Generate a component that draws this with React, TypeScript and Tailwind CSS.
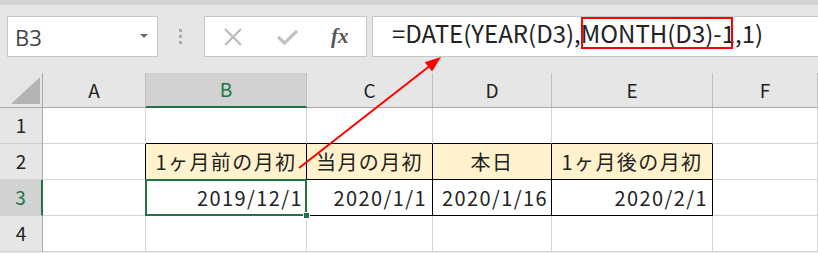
import React from "react";

const F = { fontFamily: '"Noto Sans CJK JP", "Noto Sans", sans-serif' };

function Cell({ className = "", children }: { className?: string; children?: React.ReactNode }) {
  return <div className={"flex items-center border-r border-b " + className}>{children}</div>;
}

export default function App() {
  return (
    <div className="relative w-[818px] h-[253px] overflow-hidden bg-[#e6e6e6]" style={F}>
      {/* top band */}
      <div className="h-[5px] bg-[#d4d4d4]" />
      {/* toolbar */}
      <div className="flex items-start pl-[7px] pt-[11px] h-[52px]">
        <div className="w-[151px] h-[41px] bg-white border border-[#c6c6c6] flex items-center justify-between pl-[7px] pr-[9px]">
          <span className="text-[22px] text-[#444] leading-none" style={{ fontFamily: '"Open Sans", "Noto Sans", sans-serif' }}>B3</span>
          <svg width="8" height="5" viewBox="0 0 8 5"><polygon points="0,0 8,0 4,4" fill="#6b6b6b" /></svg>
        </div>
        <div className="ml-[21px] mt-[13px] flex flex-col gap-[3px]">
          <div className="w-[3px] h-[3px] bg-[#aaaaaa]" />
          <div className="w-[3px] h-[3px] bg-[#aaaaaa]" />
          <div className="w-[3px] h-[3px] bg-[#aaaaaa]" />
        </div>
        <div className="ml-[22px] w-[163px] h-[41px] bg-white border border-[#c6c6c6] flex items-center">
          <svg className="ml-[18px]" width="20" height="18" viewBox="0 0 20 18">
            <path d="M2 1 L18 17 M18 1 L2 17" stroke="#b9b9b9" strokeWidth="2" fill="none" />
          </svg>
          <svg className="ml-[34px]" width="21" height="16" viewBox="0 0 21 16">
            <path d="M1 8 L7.5 14 L20 2" stroke="#c2c2c2" strokeWidth="3.2" fill="none" />
          </svg>
          <span className="ml-[33px] text-[21px] italic text-[#555] leading-none font-semibold" style={{ fontFamily: '"Liberation Serif", "DejaVu Serif", serif' }}>
            fx
          </span>
        </div>
        <div className="ml-[5px] flex-1 h-[41px] bg-white border border-[#c6c6c6] border-r-0 flex items-center pl-[19px] pb-[8px]">
          <span className="text-[24px] leading-none text-[#222] whitespace-nowrap">
            =DATE(YEAR(D3),
            <span className="relative">
              MONTH(D3)-1
              <span className="absolute left-[0px] right-[2px] top-[2px] bottom-[1px] border-2 border-[#ff0000]" />
            </span>
            ,1)
          </span>
        </div>
      </div>
      {/* gap */}
      <div className="h-[16px]" />
      {/* sheet */}
      <div
        className="grid text-[#222]"
        style={{ gridTemplateColumns: "43px 103px 161px 126px 119px 161px 105px", gridTemplateRows: "35px 36px 36px 36px 36px" }}
      >
        {/* header row */}
        <div className="relative border-r border-b border-[#a8a8a8] bg-[#e6e6e6]">
          <svg className="absolute left-[11px] top-[4px]" width="29" height="27" viewBox="0 0 29 27">
            <polygon points="29,0 29,27 0,27" fill="#b4b4b4" />
          </svg>
        </div>
        <Cell className="justify-center border-[#bfbfbf] border-b-[#a8a8a8] text-[19px]">A</Cell>
        <Cell className="justify-center bg-[#d2d2d2] border-[#bfbfbf] border-b-2 border-b-[#217346] text-[19px] text-[#217346]">B</Cell>
        <Cell className="justify-center border-[#bfbfbf] border-b-[#a8a8a8] text-[19px]">C</Cell>
        <Cell className="justify-center border-[#bfbfbf] border-b-[#a8a8a8] text-[19px]">D</Cell>
        <Cell className="justify-center border-[#bfbfbf] border-b-[#a8a8a8] text-[19px]">E</Cell>
        <Cell className="justify-center border-[#bfbfbf] border-b-[#a8a8a8] text-[19px]">F</Cell>

        {/* row 1 */}
        <Cell className="justify-center border-r-[#a8a8a8] border-b-[#cfcfcf] text-[19px]">1</Cell>
        <Cell className="bg-white border-[#d4d4d4]" />
        <Cell className="bg-white border-r-[#d4d4d4] border-b-black" />
        <Cell className="bg-white border-r-[#d4d4d4] border-b-black" />
        <Cell className="bg-white border-r-[#d4d4d4] border-b-black" />
        <Cell className="bg-white border-r-[#d4d4d4] border-b-black" />
        <Cell className="bg-white border-[#d4d4d4]" />

        {/* row 2 */}
        <Cell className="justify-center border-r-[#a8a8a8] border-b-[#cfcfcf] text-[19px]">2</Cell>
        <Cell className="bg-white border-r-black border-b-[#d4d4d4]" />
        <Cell className="justify-center bg-[#fff2cc] border-black text-[20px] tracking-[1.4px]">1ヶ月前の月初</Cell>
        <Cell className="justify-center bg-[#fff2cc] border-black text-[20px] tracking-[1.4px]">当月の月初</Cell>
        <Cell className="justify-center bg-[#fff2cc] border-black text-[20px] tracking-[1.4px]">本日</Cell>
        <Cell className="justify-center bg-[#fff2cc] border-black text-[20px] tracking-[1.4px]">1ヶ月後の月初</Cell>
        <Cell className="bg-white border-[#d4d4d4]" />

        {/* row 3 */}
        <Cell className="justify-center bg-[#d2d2d2] border-r-2 border-r-[#217346] border-b-[#cfcfcf] text-[19px] text-[#217346]">3</Cell>
        <Cell className="bg-white border-r-black border-b-[#d4d4d4]" />
        <div className="relative flex items-center justify-end pr-[3px] bg-white border-r border-b border-black text-[20px] tracking-[1.4px]">
          2019/12/1
          <span className="absolute left-[-1px] top-[-1px] right-[-1px] bottom-[-1px] border-2 border-[#217346]" />
          <span className="absolute right-[-4px] bottom-[-4px] w-[7px] h-[7px] bg-[#217346] border border-white" />
        </div>
        <Cell className="justify-end pr-[5px] bg-white border-black text-[20px] tracking-[1.4px]">2020/1/1</Cell>
        <Cell className="justify-end pr-[3px] bg-white border-black text-[20px] tracking-[1.4px]">2020/1/16</Cell>
        <Cell className="justify-end pr-[4px] bg-white border-black text-[20px] tracking-[1.4px]">2020/2/1</Cell>
        <Cell className="bg-white border-[#d4d4d4]" />

        {/* row 4 */}
        <Cell className="justify-center border-r-[#a8a8a8] border-b-[#cfcfcf] text-[19px]">4</Cell>
        <Cell className="bg-white border-[#d4d4d4]" />
        <Cell className="bg-white border-[#d4d4d4]" />
        <Cell className="bg-white border-[#d4d4d4]" />
        <Cell className="bg-white border-[#d4d4d4]" />
        <Cell className="bg-white border-[#d4d4d4]" />
        <Cell className="bg-white border-[#d4d4d4]" />
      </div>

      {/* red arrow annotation */}
      <svg className="absolute left-0 top-0 pointer-events-none" width="818" height="253" viewBox="0 0 818 253">
        <line x1="299" y1="168" x2="429" y2="66.5" stroke="#ff0000" strokeWidth="2" />
        <polygon points="441,57 432.1,71.6 424.7,62.2" fill="#ff0000" />
      </svg>
    </div>
  );
}
